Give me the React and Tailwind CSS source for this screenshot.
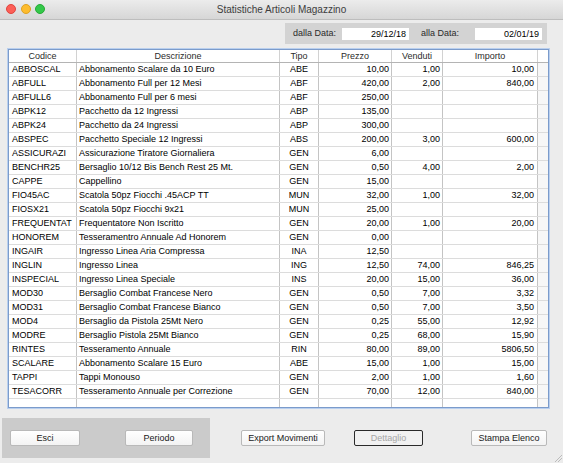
import React from 'react';

const cols = [
  { key: 'codice', label: 'Codice', w: 'w-[68px]', align: 'text-left pl-[3px]' },
  { key: 'desc', label: 'Descrizione', w: 'w-[203px]', align: 'text-left pl-[2px]' },
  { key: 'tipo', label: 'Tipo', w: 'w-[39px]', align: 'text-center' },
  { key: 'prezzo', label: 'Prezzo', w: 'w-[73px]', align: 'text-right pr-[2px]' },
  { key: 'venduti', label: 'Venduti', w: 'w-[51px]', align: 'text-right pr-[2px]' },
  { key: 'importo', label: 'Importo', w: 'w-[95px]', align: 'text-right pr-[3px]' },
];

const rows = [
  ['ABBOSCAL', 'Abbonamento Scalare da 10 Euro', 'ABE', '10,00', '1,00', '10,00'],
  ['ABFULL', 'Abbonamento Full per 12 Mesi', 'ABF', '420,00', '2,00', '840,00'],
  ['ABFULL6', 'Abbonamento Full per 6 mesi', 'ABF', '250,00', '', ''],
  ['ABPK12', 'Pacchetto da 12 Ingressi', 'ABP', '135,00', '', ''],
  ['ABPK24', 'Pacchetto da 24 Ingressi', 'ABP', '300,00', '', ''],
  ['ABSPEC', 'Pacchetto Speciale 12 Ingressi', 'ABS', '200,00', '3,00', '600,00'],
  ['ASSICURAZI', 'Assicurazione Tiratore Giornaliera', 'GEN', '6,00', '', ''],
  ['BENCHR25', 'Bersaglio 10/12 Bis Bench Rest 25 Mt.', 'GEN', '0,50', '4,00', '2,00'],
  ['CAPPE', 'Cappellino', 'GEN', '15,00', '', ''],
  ['FIO45AC', 'Scatola 50pz Fiocchi .45ACP TT', 'MUN', '32,00', '1,00', '32,00'],
  ['FIOSX21', 'Scatola 50pz Fiocchi 9x21', 'MUN', '25,00', '', ''],
  ['FREQUENTAT', 'Frequentatore Non Iscritto', 'GEN', '20,00', '1,00', '20,00'],
  ['HONOREM', 'Tesseramentro Annuale Ad Honorem', 'GEN', '0,00', '', ''],
  ['INGAIR', 'Ingresso Linea Aria Compressa', 'INA', '12,50', '', ''],
  ['INGLIN', 'Ingresso Linea', 'ING', '12,50', '74,00', '846,25'],
  ['INSPECIAL', 'Ingresso Linea Speciale', 'INS', '20,00', '15,00', '36,00'],
  ['MOD30', 'Bersaglio Combat Francese Nero', 'GEN', '0,50', '7,00', '3,32'],
  ['MOD31', 'Bersaglio Combat Francese Bianco', 'GEN', '0,50', '7,00', '3,50'],
  ['MOD4', 'Bersaglio da Pistola 25Mt Nero', 'GEN', '0,25', '55,00', '12,92'],
  ['MODRE', 'Bersaglio Pistola 25Mt Bianco', 'GEN', '0,25', '68,00', '15,90'],
  ['RINTES', 'Tesseramento Annuale', 'RIN', '80,00', '89,00', '5806,50'],
  ['SCALARE', 'Abbonamento Scalare 15 Euro', 'ABE', '15,00', '1,00', '15,00'],
  ['TAPPI', 'Tappi Monouso', 'GEN', '2,00', '1,00', '1,60'],
  ['TESACORR', 'Tesseramento Annuale per Correzione', 'GEN', '70,00', '12,00', '840,00'],
];

const Row = ({ cells }) => (
  <div className="flex h-[14px] shrink-0 border-b border-[#dcdcdc] text-black">
    {cols.map((c, i) => (
      <div
        key={c.key}
        className={`${c.w} ${c.align} shrink-0 border-r border-[#c4c4c4] leading-[13px] whitespace-nowrap overflow-hidden`}
      >
        {cells[i]}
      </div>
    ))}
    <div className="w-[10px] shrink-0 bg-[#f7f7f7]"></div>
  </div>
);

const Btn = ({ children, w, disabled }) => (
  <button
    className={`${w} h-[16px] shrink-0 rounded-[2px] text-[9px] leading-none ${
      disabled
        ? 'border border-[#2a2a2a] bg-[#f1f1f1] text-[#a6a6a6]'
        : 'border border-[#b9b9b9] bg-gradient-to-b from-white to-[#f3f3f3] text-[#1a1a1a]'
    }`}
  >
    {children}
  </button>
);

export default function App() {
  return (
    <div className="w-[563px] h-[463px] bg-[#ececec] flex flex-col font-['Liberation_Sans',Arial,sans-serif] text-[9px] overflow-hidden relative">
      {/* barra titolo */}
      <div className="h-[20px] shrink-0 relative flex items-center justify-center bg-gradient-to-b from-[#ececec] to-[#d6d6d6] border-b border-[#bdbdbd]">
        <div className="absolute left-[6px] top-[4px] flex gap-[4.5px]">
          <span className="w-[10px] h-[10px] rounded-full bg-[#fc5f57] border border-[#e0443e]"></span>
          <span className="w-[10px] h-[10px] rounded-full bg-[#fdbc2e] border border-[#dea123]"></span>
          <span className="w-[10px] h-[10px] rounded-full bg-[#34c84a] border border-[#27aa35]"></span>
        </div>
        <span className="text-[10px] text-[#3d3d3d]">Statistiche Articoli Magazzino</span>
      </div>

      {/* date */}
      <div className="flex justify-end pr-[16px] mt-[3px]">
        <div className="w-[262px] h-[21px] bg-[#d3d3d3] flex items-center pl-[8px] text-[#2a2a2a]">
          <span className="w-[49px]">dalla Data:</span>
          <div className="w-[67px] h-[12px] bg-white text-right pr-[3px] leading-[12px] text-black">29/12/18</div>
          <span className="ml-[12px] w-[54px]">alla Data:</span>
          <div className="w-[67px] h-[12px] bg-white text-right pr-[3px] leading-[12px] text-black">02/01/19</div>
        </div>
      </div>

      {/* tabella */}
      <div className="ml-[8px] mt-[5px] w-[541px] h-[359px] shrink-0 border border-[#7b9bcb] shadow-[0_0_0_1px_#b9cfee] bg-white flex flex-col overflow-hidden">
        <div className="flex h-[13px] shrink-0 border-b border-[#b4b4b4] text-[#2b2b2b]">
          {cols.map((c) => (
            <div key={c.key} className={`${c.w} shrink-0 text-center border-r border-[#d2d2d2] leading-[12px]`}>
              {c.label}
            </div>
          ))}
          <div className="w-[10px] shrink-0"></div>
        </div>
        {rows.map((r) => (
          <Row key={r[0]} cells={r} />
        ))}
        <Row cells={['', '', '', '', '', '']} />
      </div>

      {/* pulsanti */}
      <div className="flex items-center mt-[10px]">
        <div className="ml-[2px] w-[208px] h-[40px] bg-[#cbcbcb] flex items-center pl-[8px] gap-[45px]">
          <Btn w="w-[70px]">Esci</Btn>
          <Btn w="w-[68px]">Periodo</Btn>
        </div>
        <div className="ml-[31px]">
          <Btn w="w-[84px]">Export Movimenti</Btn>
        </div>
        <div className="ml-[29px]">
          <Btn w="w-[69px]" disabled>Dettaglio</Btn>
        </div>
        <div className="ml-[48px]">
          <Btn w="w-[76px]">Stampa Elenco</Btn>
        </div>
      </div>

      {/* maniglia ridimensionamento */}
      <svg className="absolute right-[1px] bottom-[1px]" width="8" height="8" viewBox="0 0 8 8">
        <line x1="1" y1="8" x2="8" y2="1" stroke="#a8a8a8" strokeWidth="0.7" />
        <line x1="4" y1="8" x2="8" y2="4" stroke="#a8a8a8" strokeWidth="0.7" />
      </svg>
    </div>
  );
}
